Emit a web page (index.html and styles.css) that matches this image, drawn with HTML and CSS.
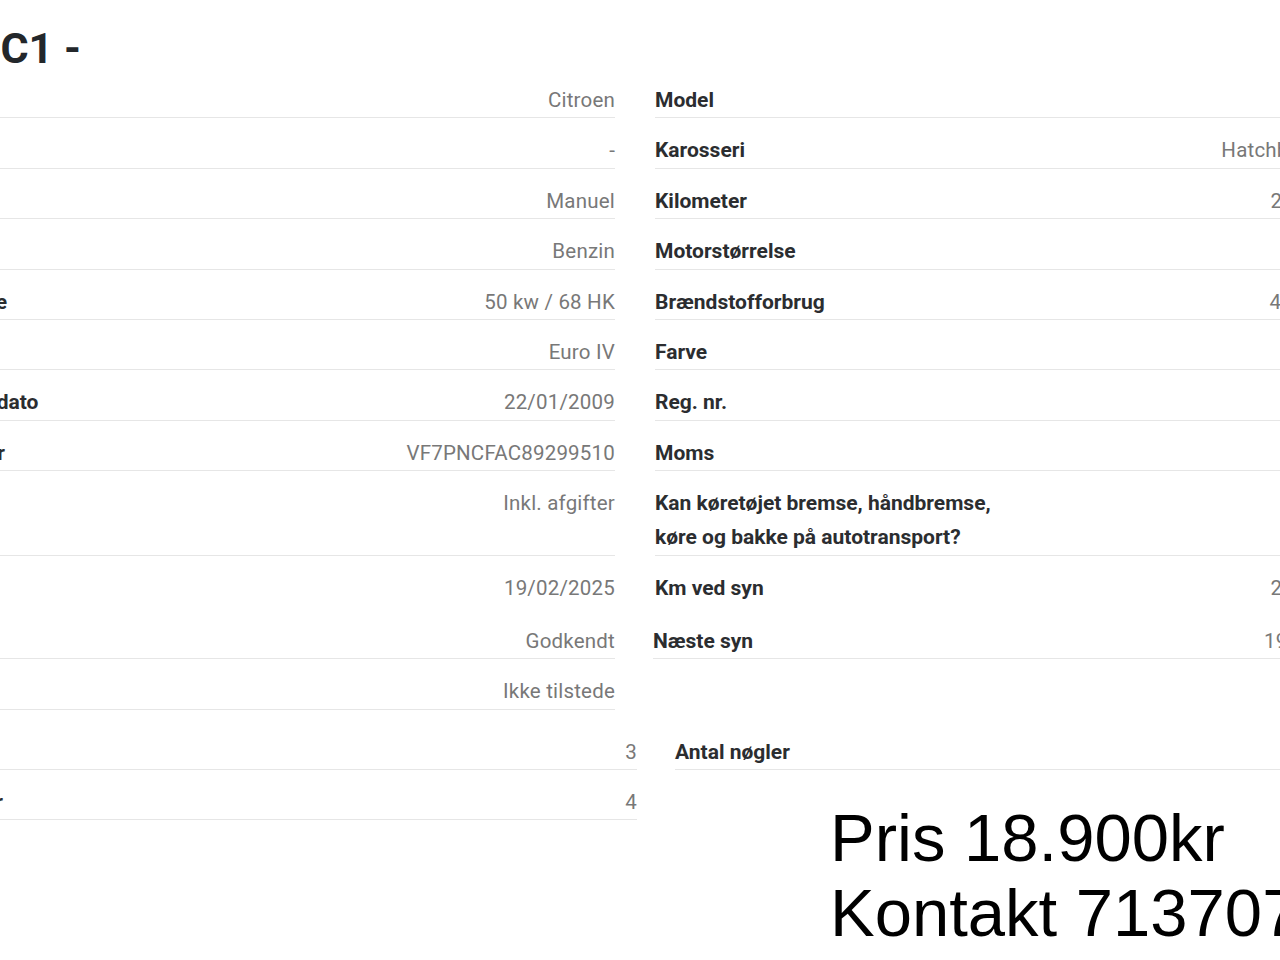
FILE: index.html
```html
<!DOCTYPE html>
<html lang="da">
<head>
<meta charset="utf-8">
<title>Citroen C1</title>
<link rel="stylesheet" href="styles.css">
</head>
<body>
<div class="page">
  <h1 class="title">Citroen C1 -</h1>

  <div class="specs first">
    <div class="cell"><span class="label">Mærke</span><span class="value">Citroen</span></div>
    <div class="cell"><span class="label">Model</span><span class="value">C1</span></div>

    <div class="cell"><span class="label">Variant</span><span class="value">-</span></div>
    <div class="cell"><span class="label">Karosseri</span><span class="value">Hatchback 5-dør</span></div>

    <div class="cell"><span class="label">Gear</span><span class="value">Manuel</span></div>
    <div class="cell"><span class="label">Kilometer</span><span class="value">214000 km</span></div>

    <div class="cell"><span class="label">Brændstof</span><span class="value">Benzin</span></div>
    <div class="cell"><span class="label">Motorstørrelse</span><span class="value">998 ccm</span></div>

    <div class="cell"><span class="label">Motorydelse</span><span class="value">50 kw / 68 HK</span></div>
    <div class="cell"><span class="label">Brændstofforbrug</span><span class="value">4,5l/100km</span></div>

    <div class="cell"><span class="label">Euronorm</span><span class="value">Euro IV</span></div>
    <div class="cell"><span class="label">Farve</span><span class="value">Rød</span></div>

    <div class="cell"><span class="label">Første reg. dato</span><span class="value">22/01/2009</span></div>
    <div class="cell"><span class="label">Reg. nr.</span><span class="value">AB12345</span></div>

    <div class="cell"><span class="label">Stelnummer</span><span class="value">VF7PNCFAC89299510</span></div>
    <div class="cell"><span class="label">Moms</span><span class="value">Nej</span></div>

    <div class="cell"><span class="label">Afgifter</span><span class="value">Inkl. afgifter</span></div>
    <div class="cell"><span class="label">Kan køretøjet bremse, håndbremse,<br>køre og bakke på autotransport?</span><span class="value">Ja</span></div>
  </div>

  <div class="specs syn">
    <div class="cell tall plain"><span class="label">Syn</span><span class="value">19/02/2025</span></div>
    <div class="cell tall plain"><span class="label">Km ved syn</span><span class="value">208000 km</span></div>

    <div class="cell"><span class="label">Resultat</span><span class="value">Godkendt</span></div>
    <div class="cell shift"><span class="label">Næste syn</span><span class="value">19/02/2027</span></div>

    <div class="cell"><span class="label">Servicebog</span><span class="value">Ikke tilstede</span></div>
    <div class="cell plain"></div>
  </div>

  <div class="specs extra">
    <div class="cell"><span class="label">Antal døre</span><span class="value">3</span></div>
    <div class="cell"><span class="label">Antal nøgler</span><span class="value">2</span></div>

    <div class="cell"><span class="label">Antal sæder</span><span class="value">4</span></div>
    <div class="cell plain"></div>
  </div>

  <div class="price">Pris 18.900kr<br>Kontakt 71370707</div>
</div>
</body>
</html>
```

FILE: styles.css
```css
html, body {
  margin: 0;
  padding: 0;
  overflow: hidden;
  background: #ffffff;
}

body {
  width: 1280px;
  height: 960px;
  font-family: Roboto, "Noto Sans", sans-serif;
}

.page {
  width: 1520px;
  margin-left: -111px;
}

.title {
  margin: 29px 0 0 -40px;
  font-size: 43px;
  line-height: 38px;
  font-weight: 700;
  color: #23272b;
  white-space: nowrap;
}

.specs {
  display: grid;
  grid-template-columns: 726px 720px;
  column-gap: 40px;
}

.specs.first {
  margin-top: 1px;
}

.cell {
  display: flex;
  justify-content: space-between;
  align-items: flex-start;
  padding-top: 15px;
  padding-bottom: 0.4px;
  line-height: 34px;
  border-bottom: 1px solid #e6e6e6;
  white-space: nowrap;
}

.cell.plain {
  border-bottom-color: transparent;
}

.cell.tall {
  padding-bottom: 3.4px;
}

.cell.shift {
  margin-left: -2px;
}

.label {
  font-size: 21px;
  font-weight: 700;
  color: #2b2d30;
}

.value {
  font-size: 20.5px;
  font-weight: 400;
  letter-spacing: 0.2px;
  color: #787878;
}

.extra {
  margin-top: 10px;
  grid-template-columns: 748px 720px;
  column-gap: 38px;
}

.price {
  margin: -20px 0 0 941px;
  font-family: "Liberation Sans", Arial, sans-serif;
  font-size: 67px;
  line-height: 75px;
  color: #000000;
  white-space: nowrap;
}
```
